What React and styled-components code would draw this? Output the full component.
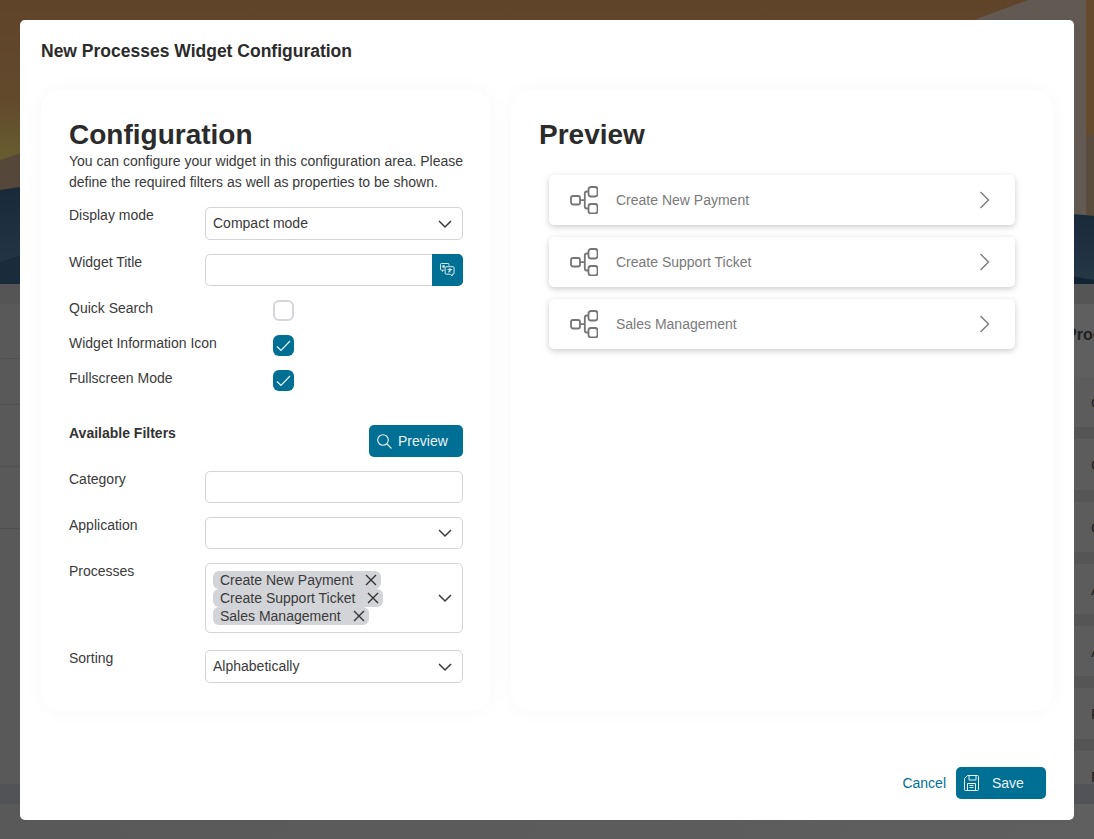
import React from 'react';
import styled, { createGlobalStyle } from 'styled-components';

const TEAL = '#006f94';
const TEXT = '#3a3a3a';

const GlobalStyle = createGlobalStyle`
  html, body { margin: 0; padding: 0; height: 100%; overflow: hidden; }
  body { background: #5c5c5c; font-family: "Liberation Sans", Arial, sans-serif; color: ${TEXT}; }
`;

const Backdrop = styled.div`
  position: fixed;
  inset: 0;
  background: linear-gradient(90deg, #595959 0%, #5c5c5c 60%, #5f5f5f 100%);
`;

const Hero = styled.svg`
  display: block;
  width: 1094px;
  height: 284px;
`;

const BackBand = styled.div`
  height: 20px;
  background: ${(p) => p.$color};
`;

const BackBody = styled.div`
  height: 480px;
  display: flex;
  justify-content: space-between;
  overflow: hidden;
`;

const LeftList = styled.div`
  width: 30px;
`;

const LeftItem = styled.div`
  box-sizing: border-box;
  height: ${(p) => p.$height}px;
  border-bottom: 1px solid #505050;
`;

const RightList = styled.div`
  width: 40px;
  display: flex;
  flex-direction: column;
`;

const BackTitle = styled.div`
  height: 73px;
  flex: none;
  padding: 21px 0 0 12px;
  box-sizing: border-box;
  font-size: 16px;
  line-height: 20px;
  font-weight: 700;
  color: #1f1f1f;
  white-space: nowrap;
`;

const BackRows = styled.div`
  display: flex;
  flex-direction: column;
  gap: 12px;
  background: #555555;
  flex: 1;
`;

const BackRow = styled.div`
  flex: none;
  box-sizing: border-box;
  height: 50.3px;
  background: #5c5c5c;
  font-size: 15px;
  line-height: 52px;
  padding-left: 37px;
  color: #222;
`;

const Overlay = styled.div`
  position: fixed;
  inset: 0;
  padding: 20px;
`;

const Modal = styled.div`
  height: 800px;
  background: #fff;
  border-radius: 5px;
  display: flex;
  flex-direction: column;
  box-sizing: border-box;
  padding: 21px;
`;

const ModalTitle = styled.h2`
  margin: 0;
  height: 49px;
  font-size: 17.5px;
  line-height: 20px;
  font-weight: 700;
  color: #2b2b2b;
`;

const Panels = styled.div`
  display: flex;
  gap: 20px;
  height: 621px;
`;

const Card = styled.section`
  box-sizing: border-box;
  width: ${(p) => p.$width}px;
  border-radius: 20px;
  background: #fff;
  box-shadow: 0 0 20px rgba(0, 0, 0, 0.03);
  padding: 28px;
`;

const CardTitle = styled.h1`
  margin: 0;
  height: 33px;
  font-size: 28px;
  line-height: 34px;
  font-weight: 700;
  color: #2b2b2b;
`;

const Intro = styled.p`
  margin: 0 -3px 14px 0;
  font-size: 14px;
  line-height: 21px;
  color: ${TEXT};
`;

const Row = styled.div`
  display: grid;
  grid-template-columns: 136px 258px;
  align-items: start;
  margin-top: ${(p) => p.$mt ?? 14}px;
`;

const Label = styled.label`
  font-size: 14px;
  line-height: 16px;
  color: ${TEXT};
`;

const FieldBox = styled.div`
  box-sizing: border-box;
  height: ${(p) => p.$height ?? 32}px;
  border: 1px solid #d3d4d7;
  border-radius: 5px;
  background: #fff;
  display: flex;
  align-items: center;
  font-size: 14px;
  color: ${TEXT};
  padding-left: 7px;
  position: relative;
`;

const FieldValue = styled.span`
  flex: 1;
  padding-bottom: 2px;
`;

const Chevron = styled.svg`
  width: 16px;
  height: 10px;
  margin-right: 9px;
  flex: none;
`;

const TranslateButton = styled.button`
  position: absolute;
  top: -1px;
  right: -1px;
  width: 31px;
  height: 32px;
  border: 0;
  padding: 0;
  background: ${TEAL};
  border-radius: 0 5px 5px 0;
  display: flex;
  align-items: center;
  justify-content: center;
`;

const CheckRow = styled.div`
  display: grid;
  grid-template-columns: 204px 21px;
  align-items: start;
  height: 35px;
`;

const CheckBox = styled.span`
  box-sizing: border-box;
  width: 21px;
  height: 21px;
  border-radius: 6px;
  border: ${(p) => (p.$checked ? '0' : '2px solid #d5d6d9')};
  background: ${(p) => (p.$checked ? TEAL : '#fff')};
  display: flex;
  align-items: center;
  justify-content: center;
`;

const FilterHead = styled.div`
  display: flex;
  justify-content: space-between;
  align-items: flex-start;
  margin-top: 20px;
`;

const Strong = styled.span`
  font-size: 14px;
  line-height: 16px;
  font-weight: 700;
  color: #333;
`;

const PrimaryButton = styled.button`
  box-sizing: border-box;
  width: ${(p) => p.$width}px;
  height: 32px;
  border: 0;
  border-radius: 5px;
  background: ${TEAL};
  color: #e9f2f5;
  font-family: inherit;
  font-size: 14px;
  display: flex;
  align-items: center;
  padding: 0 0 0 ${(p) => p.$pad}px;
  gap: ${(p) => p.$gap}px;
`;

const Chips = styled.div`
  flex: 1;
  display: flex;
  flex-direction: column;
  align-items: flex-start;
`;

const Chip = styled.span`
  height: 18px;
  background: #d3d4d7;
  border-radius: 6px;
  display: flex;
  align-items: center;
  padding: 0 3px 0 7px;
  gap: 11px;
  font-size: 14px;
  line-height: 18px;
  color: ${TEXT};
`;

const PreviewList = styled.div`
  display: flex;
  flex-direction: column;
  gap: 12px;
  margin: 24px 10px 0;
`;

const ProcessRow = styled.div`
  height: 50px;
  border-radius: 5px;
  background: #fff;
  box-shadow: 0 2px 6px rgba(0, 0, 0, 0.2);
  display: flex;
  align-items: center;
  padding: 0 25px 0 21px;
  font-size: 14px;
  color: #7a7a7a;
`;

const ProcessName = styled.span`
  flex: 1;
  margin-left: 18px;
`;

const Footer = styled.footer`
  margin-top: 56px;
  padding-right: 7px;
  display: flex;
  justify-content: flex-end;
  align-items: center;
  gap: 10px;
`;

const CancelLink = styled.a`
  font-size: 14px;
  color: ${TEAL};
`;

const ChevronDown = () => (
  <Chevron viewBox="0 0 16 10" fill="none" stroke="#3a3a3a" strokeWidth="1.5">
    <path d="M2 2l6 6 6-6" />
  </Chevron>
);

const TreeIcon = () => (
  <svg width="28" height="28" viewBox="0 0 28 28" fill="none" stroke="#757575" strokeWidth="1.8">
    <rect x="1" y="10" width="9" height="8.500" rx="2" />
    <rect x="18.500" y="1" width="9" height="9.500" rx="2.500" />
    <rect x="18.500" y="18" width="9" height="9.500" rx="2.500" />
    <path d="M10 14.200H14.800M18.500 5.500h-1.700a2 2 0 0 0-2 2v13a2 2 0 0 0 2 2h1.700" />
  </svg>
);

const ChevronRight = () => (
  <svg width="11" height="18" viewBox="0 0 11 18" fill="none" stroke="#7a7a7a" strokeWidth="1.400">
    <path d="M1.500 1l8 8-8 8" />
  </svg>
);

const CheckMark = () => (
  <svg width="15" height="12" viewBox="0 0 15 12" fill="none" stroke="#eaf3f6" strokeWidth="1.200">
    <path d="M1 6.500l4 4 9-9.500" />
  </svg>
);

const CloseIcon = () => (
  <svg width="14" height="14" viewBox="0 0 14 14" fill="none" stroke="#333" strokeWidth="1.400">
    <path d="M2 2l10 10M12 2L2 12" />
  </svg>
);

const SearchIcon = () => (
  <svg width="15" height="15" viewBox="0 0 15 15" fill="none" stroke="#e9f2f5" strokeWidth="1.100">
    <circle cx="6" cy="6" r="5.300" />
    <path d="M10 10l4.500 4.500" />
  </svg>
);

const SaveIcon = () => (
  <svg width="15" height="16" viewBox="0 0 15 16" fill="none" stroke="#e9f2f5" strokeWidth="1">
    <path d="M3.500.5h10a1 1 0 0 1 1 1v13a1 1 0 0 1-1 1h-12a1 1 0 0 1-1-1V3.500z" />
    <path d="M5 .5v4.500h7V.5M3.500 15.500V8.500h8v7M5.500 10.500h4M5.500 12.500h4" />
  </svg>
);

const TranslateIcon = () => (
  <svg width="15" height="14" viewBox="0 0 16 15" fill="none" stroke="#eaf3f6" strokeWidth="1">
    <path d="M1.500.5h7a1 1 0 0 1 1 1V3M5 7.500H4L2.500 9V7.500h-1a1 1 0 0 1-1-1v-5a1 1 0 0 1 1-1" />
    <path d="M6.500 4h7.500a1 1 0 0 1 1 1v6a1 1 0 0 1-1 1h-1v2L11 12H6.500a1 1 0 0 1-1-1V5a1 1 0 0 1 1-1z" />
    <path d="M8 7h5M10.500 5.500V10M8.500 10l3-2.500" />
    <rect x="2.500" y="2.500" width="2.500" height="2.500" fill="#eaf3f6" stroke="none" />
  </svg>
);

const PROCESSES = ['Create New Payment', 'Create Support Ticket', 'Sales Management'];
const BACK_ROWS = ['C', 'C', 'C', 'A', 'A', 'P', 'P'];
const LEFT_ITEMS = [55, 46, 62, 62];

const Background = () => (
  <Backdrop>
    <Hero viewBox="0 0 1094 284" preserveAspectRatio="none">
      <defs>
        <linearGradient id="sky" x1="0" y1="0" x2="0" y2="1">
          <stop offset="0" stopColor="#60442a" />
          <stop offset="0.35" stopColor="#62492c" />
          <stop offset="0.55" stopColor="#665c2f" />
          <stop offset="1" stopColor="#6b6431" />
        </linearGradient>
        <linearGradient id="sea" x1="0" y1="0" x2="0" y2="1">
          <stop offset="0" stopColor="#18293a" />
          <stop offset="1" stopColor="#263947" />
        </linearGradient>
      </defs>
      <rect width="1094" height="284" fill="url(#sky)" />
      <path d="M1028 0L900 47V220H1094V0z" fill="#625a52" />
      <path d="M1086 0h8v135h-8z" fill="#664a2d" />
      <path d="M1086 135h8v81h-8z" fill="#5a4c3c" />
      <path d="M0 160L30 150 40 192 0 195z" fill="#554739" />
      <path d="M0 190Q60 180 120 190V284H0z" fill="url(#sea)" />
      <path d="M0 262L30 252V284H0z" fill="#1a2c3b" />
      <path d="M1034 216q30 -4 60 0V284H1034z" fill="url(#sea)" />
      <path d="M1064 275l30 5v4H1064z" fill="#122433" />
    </Hero>
    <BackBand $color="#555555" />
    <BackBody>
      <LeftList>
        {LEFT_ITEMS.map((height, i) => (
          <LeftItem key={i} $height={height} />
        ))}
      </LeftList>
      <RightList>
        <BackTitle>Processes</BackTitle>
        <BackRows>
          {BACK_ROWS.map((letter, i) => (
            <BackRow key={i}>{letter}</BackRow>
          ))}
        </BackRows>
      </RightList>
    </BackBody>
    <BackBand $color="#515357" />
  </Backdrop>
);

export default function App() {
  return (
    <>
      <GlobalStyle />
      <Background />
      <Overlay>
        <Modal>
          <ModalTitle>New Processes Widget Configuration</ModalTitle>
          <Panels>
            <Card $width={450}>
              <CardTitle>Configuration</CardTitle>
              <Intro>
                You can configure your widget in this configuration area. Please define the
                required filters as well as properties to be shown.
              </Intro>
              <Row $mt={0}>
                <Label>Display mode</Label>
                <FieldBox $height={33}>
                  <FieldValue>Compact mode</FieldValue>
                  <ChevronDown />
                </FieldBox>
              </Row>
              <Row>
                <Label>Widget Title</Label>
                <FieldBox>
                  <TranslateButton>
                    <TranslateIcon />
                  </TranslateButton>
                </FieldBox>
              </Row>
              <Row $mt={14}>
                <CheckRow>
                  <Label>Quick Search</Label>
                  <CheckBox />
                </CheckRow>
              </Row>
              <Row $mt={0}>
                <CheckRow>
                  <Label>Widget Information Icon</Label>
                  <CheckBox $checked>
                    <CheckMark />
                  </CheckBox>
                </CheckRow>
              </Row>
              <Row $mt={0}>
                <CheckRow>
                  <Label>Fullscreen Mode</Label>
                  <CheckBox $checked>
                    <CheckMark />
                  </CheckBox>
                </CheckRow>
              </Row>
              <FilterHead>
                <Strong>Available Filters</Strong>
                <PrimaryButton $width={94} $pad={8} $gap={6}>
                  <SearchIcon />
                  Preview
                </PrimaryButton>
              </FilterHead>
              <Row>
                <Label>Category</Label>
                <FieldBox />
              </Row>
              <Row>
                <Label>Application</Label>
                <FieldBox>
                  <FieldValue />
                  <ChevronDown />
                </FieldBox>
              </Row>
              <Row>
                <Label>Processes</Label>
                <FieldBox $height={70}>
                  <Chips>
                    {PROCESSES.map((name) => (
                      <Chip key={name}>
                        {name}
                        <CloseIcon />
                      </Chip>
                    ))}
                  </Chips>
                  <ChevronDown />
                </FieldBox>
              </Row>
              <Row $mt={17}>
                <Label>Sorting</Label>
                <FieldBox $height={33}>
                  <FieldValue>Alphabetically</FieldValue>
                  <ChevronDown />
                </FieldBox>
              </Row>
            </Card>
            <Card $width={542}>
              <CardTitle>Preview</CardTitle>
              <PreviewList>
                {PROCESSES.map((name) => (
                  <ProcessRow key={name}>
                    <TreeIcon />
                    <ProcessName>{name}</ProcessName>
                    <ChevronRight />
                  </ProcessRow>
                ))}
              </PreviewList>
            </Card>
          </Panels>
          <Footer>
            <CancelLink>Cancel</CancelLink>
            <PrimaryButton $width={90} $pad={8} $gap={13}>
              <SaveIcon />
              Save
            </PrimaryButton>
          </Footer>
        </Modal>
      </Overlay>
    </>
  );
}
